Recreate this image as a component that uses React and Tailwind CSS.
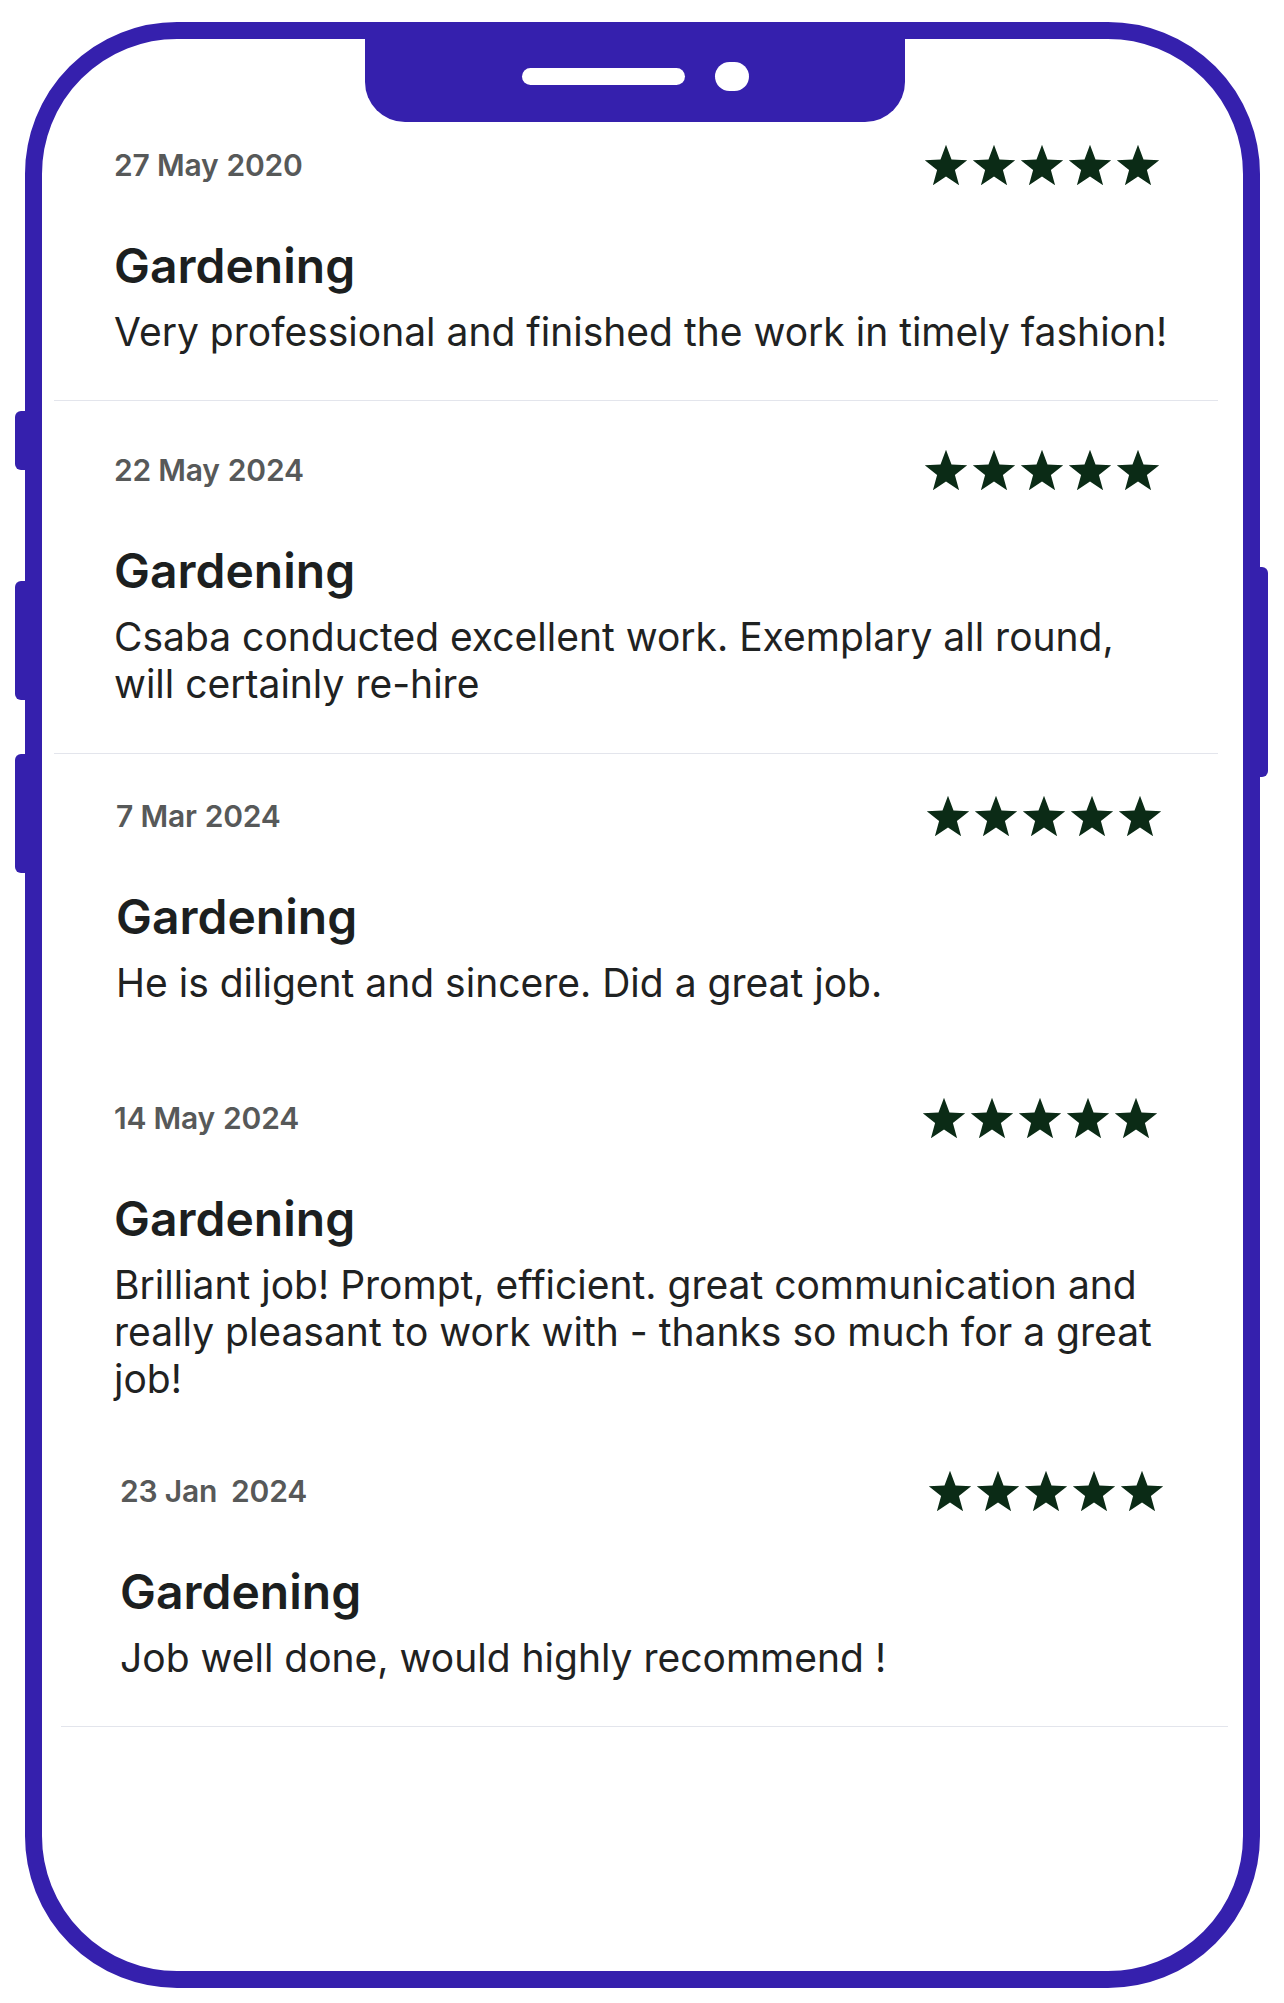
import React from 'react';

const reviews = [
  {
    id: 1,
    date: ['27 May', '2020'],
    title: 'Gardening',
    text: 'Very professional and finished the work in timely fashion!',
    wrap: 'ml-[12px] mr-[25px] border-b border-[#e3e5ec] pt-[19px] pb-[45px] pl-[60px] pr-[43px]',
    stars: 'mr-[13px]',
  },
  {
    id: 2,
    date: ['22 May', '2024'],
    title: 'Gardening',
    text: 'Csaba conducted excellent work. Exemplary all round, will certainly re-hire',
    wrap: 'ml-[12px] mr-[25px] border-b border-[#e3e5ec] pt-[45px] pb-[46px] pl-[60px] pr-[43px]',
    stars: 'mr-[13px]',
  },
  {
    id: 3,
    date: ['7 Mar', '2024'],
    title: 'Gardening',
    text: 'He is diligent and sincere. Did a great job.',
    wrap: 'ml-[12px] mr-[25px] pt-[38px] pb-[44px] pl-[62px] pr-[43px]',
    stars: 'mr-[11px]',
  },
  {
    id: 4,
    date: ['14 May', '2024'],
    title: 'Gardening',
    text: 'Brilliant job! Prompt, efficient. great communication and really pleasant to work with - thanks so much for a great job!',
    wrap: 'ml-[12px] mr-[25px] pt-[44px] pb-[33px] pl-[60px] pr-[43px]',
    stars: 'mr-[15px]',
  },
  {
    id: 5,
    date: ['23 Jan', '2024'],
    gap: true,
    title: 'Gardening',
    text: 'Job well done, would highly recommend !',
    wrap: 'ml-[19px] mr-[15px] border-b border-[#e3e5ec] pt-[32px] pb-[45px] pl-[59px] pr-[43px]',
    stars: 'mr-[19px]',
  },
];

// plain 5 point star, fills most of its 24 box
const Star = () => (
  <svg viewBox="0 0 24 24" className="w-[48px] h-[48px] block">
    <polygon
      points="12,1.9 14.75,9.26 22.6,9.6 16.45,14.5 18.55,22.07 12,17.73 5.45,22.07 7.55,14.5 1.4,9.6 9.25,9.26"
      fill="#0b2b16"
    />
  </svg>
);

const ReviewItem = ({ review }) => (
  <div className={review.wrap}>
    <div className="flex items-center justify-between h-[48px]">
      <span className="text-[30px] leading-[36px] font-semibold tracking-[-0.2px] text-[#575959]">
        {review.date[0]}
        <span className={review.gap ? 'ml-[14px]' : 'ml-[8px]'}>{review.date[1]}</span>
      </span>
      <div className={`flex ${review.stars}`}>
        {[0, 1, 2, 3, 4].map(i => (
          <Star key={i} />
        ))}
      </div>
    </div>
    <h3 className="mt-[48px] text-[48px] leading-[58px] font-semibold text-[#1c1f1f]">{review.title}</h3>
    <p className="mt-[13px] text-[39px] leading-[47px] text-[#1f2222]">{review.text}</p>
  </div>
);

export default function App() {
  return (
    <div
      className="min-h-screen bg-white pt-[22px] pl-[25px]"
      style={{ fontFamily: 'Inter, "Noto Sans", "Liberation Sans", sans-serif' }}
    >
      <div className="relative w-[1235px] h-[1966px]">
        {/* side buttons */}
        <div className="absolute left-[-10px] top-[389px] w-[14px] h-[59px] rounded-l-[6px] bg-[#3520ad]" />
        <div className="absolute left-[-10px] top-[559px] w-[14px] h-[119px] rounded-l-[6px] bg-[#3520ad]" />
        <div className="absolute left-[-10px] top-[732px] w-[14px] h-[119px] rounded-l-[6px] bg-[#3520ad]" />
        <div className="absolute right-[-8px] top-[545px] w-[12px] h-[210px] rounded-r-[6px] bg-[#3520ad]" />

        <div className="relative w-full h-full bg-white border-[17px] border-[#3520ad] rounded-[152px] overflow-hidden">
          {/* notch */}
          <div className="ml-[323px] w-[540px] h-[83px] bg-[#3520ad] rounded-b-[40px] flex items-center justify-center gap-[30px] pb-[8px]">
            <div className="w-[163px] h-[17px] rounded-full bg-white" />
            <div className="w-[34px] h-[29px] rounded-full bg-white" />
          </div>

          <div>
            {reviews.map(review => (
              <ReviewItem key={review.id} review={review} />
            ))}
          </div>
        </div>
      </div>
    </div>
  );
}
